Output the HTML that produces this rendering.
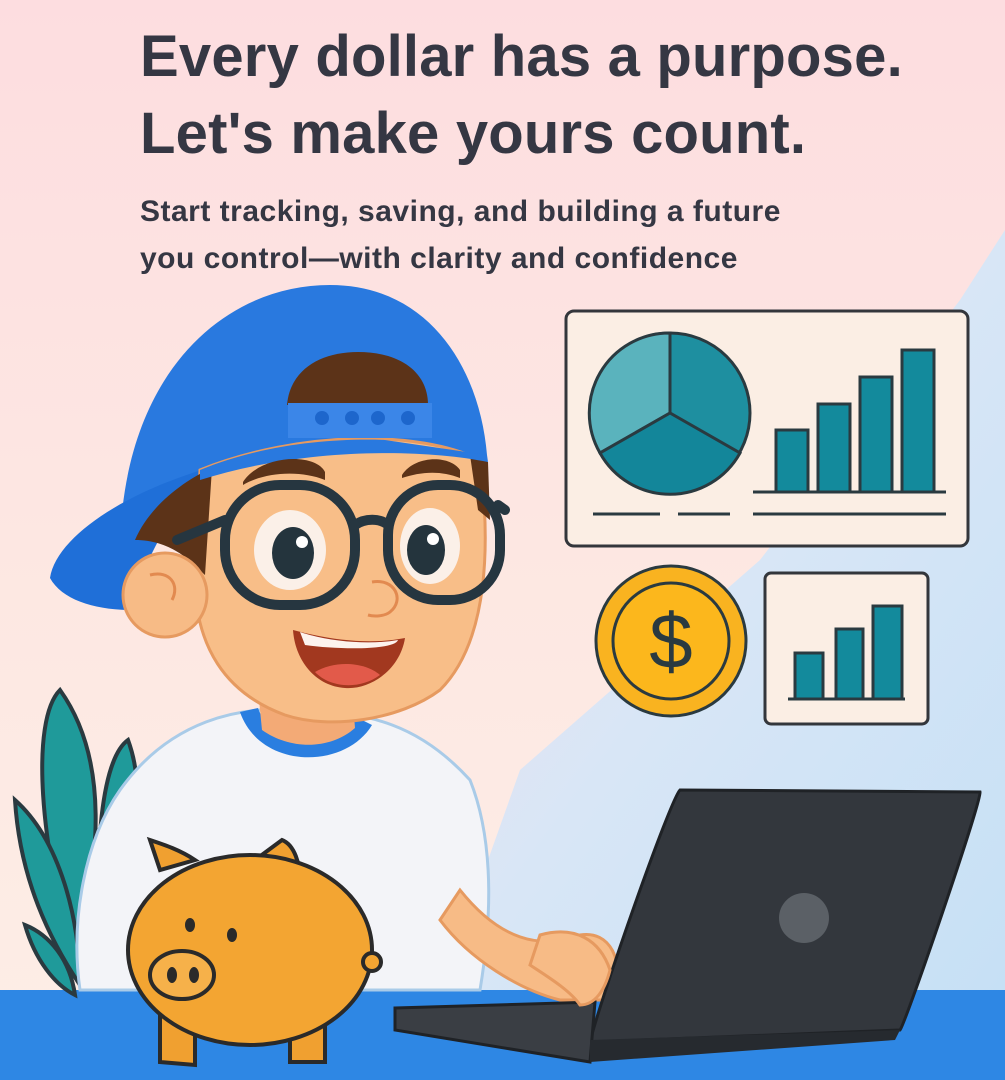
<!DOCTYPE html>
<html><head><meta charset="utf-8"><style>
html,body{margin:0;padding:0}
body{width:1005px;height:1080px;overflow:hidden;position:relative;font-family:"Liberation Sans",Arial,sans-serif;background:#fde8e2}
svg{position:absolute;left:0;top:0}
.t{position:absolute;left:140px;color:#353743;font-weight:700;white-space:nowrap}
h1{margin:0;font-size:58px;line-height:77px;letter-spacing:0.2px}
</style></head><body>
<svg width="1005" height="1080" viewBox="0 0 1005 1080">
<defs>
<linearGradient id="bg" x1="0" y1="0" x2="0" y2="1"><stop offset="0" stop-color="#fddde0"/><stop offset="0.5" stop-color="#fde7e2"/><stop offset="1" stop-color="#fdeee6"/></linearGradient>
<linearGradient id="bl" x1="0" y1="0" x2="1" y2="1"><stop offset="0" stop-color="#f3e0ec"/><stop offset="0.5" stop-color="#d8e6f6"/><stop offset="1" stop-color="#c6e0f5"/></linearGradient>
</defs>
<rect width="1005" height="1080" fill="url(#bg)"/>
<path d="M1005 230 L1005 995 L440 995 L520 770 L760 560 L960 300 Z" fill="url(#bl)"/>
<rect x="0" y="990" width="1005" height="90" fill="#2e87e4"/>
<g fill="#1f9a9a" stroke="#2a3a40" stroke-width="4">
<path d="M60 690 C30 720 40 850 75 960 C100 860 110 760 60 690 Z"/>
<path d="M128 740 C100 760 95 860 100 930 C130 880 150 800 128 740 Z"/>
<path d="M15 800 C20 880 50 940 80 985 C80 920 60 840 15 800 Z"/>
<path d="M25 925 C35 960 55 985 75 995 C70 960 50 935 25 925 Z"/>
</g>
<rect x="566" y="311" width="402" height="235" rx="8" fill="#fbeee4" stroke="#33363b" stroke-width="3"/>
<circle cx="670" cy="413" r="80" fill="#1e8fa0" stroke="#2a3a40" stroke-width="3"/>
<path d="M670 413 L670 333 A80 80 0 0 0 600 453 Z" fill="#5ab3bd" stroke="#2a3a40" stroke-width="3"/>
<path d="M670 413 L600 453 A80 80 0 0 0 740 453 Z" fill="#13869a" stroke="#2a3a40" stroke-width="3"/>
<g fill="#138a9c" stroke="#2a3a40" stroke-width="3">
<rect x="776" y="430" width="32" height="62"/><rect x="818" y="404" width="32" height="88"/><rect x="860" y="377" width="32" height="115"/><rect x="902" y="350" width="32" height="142"/>
</g>
<g stroke="#2a3a40" stroke-width="3"><line x1="753" y1="492" x2="946" y2="492"/><line x1="593" y1="514" x2="660" y2="514"/><line x1="678" y1="514" x2="730" y2="514"/><line x1="753" y1="514" x2="946" y2="514"/></g>
<circle cx="671" cy="641" r="75" fill="#f9b320" stroke="#2a3a40" stroke-width="3"/>
<circle cx="671" cy="641" r="58" fill="#fcb71c" stroke="#2a3a40" stroke-width="3"/>
<text x="671" y="668" text-anchor="middle" font-family="Liberation Sans" font-size="78" fill="#2a3a40">$</text>
<rect x="765" y="573" width="163" height="151" rx="6" fill="#fbeee4" stroke="#33363b" stroke-width="3"/>
<g fill="#138a9c" stroke="#2a3a40" stroke-width="3"><rect x="795" y="653" width="28" height="46"/><rect x="836" y="629" width="27" height="70"/><rect x="873" y="606" width="29" height="93"/></g>
<line x1="788" y1="699" x2="905" y2="699" stroke="#2a3a40" stroke-width="3"/>
<path d="M120 790 C170 720 240 705 300 710 C370 712 420 725 470 780 C490 830 495 900 480 990 L80 990 C70 920 85 840 120 790 Z" fill="#f3f4f8" stroke="#a9cbe8" stroke-width="3"/>
<path d="M240 712 C260 770 345 770 372 725 L352 715 C335 745 270 745 258 708 Z" fill="#2a7ee0"/>
<path d="M460 890 C500 940 540 950 580 935 C610 930 625 960 615 1000 L560 1000 C520 990 470 960 440 920 Z" fill="#f7bb86" stroke="#e69a60" stroke-width="3"/>
<path d="M258 690 L262 730 C290 750 330 750 355 728 L352 690 Z" fill="#f3aa76"/>
<!-- cap -->
<path d="M120 570 C115 380 220 285 330 285 C430 285 480 370 487 455 L487 470 L200 480 L130 560 Z" fill="#2979df"/>
<path d="M50 578 C55 545 100 510 160 485 C210 465 260 452 290 448 L220 470 C180 500 150 540 132 610 C95 610 62 600 50 578 Z" fill="#1f6fd8"/>
<!-- face -->
<path d="M200 470 C300 430 420 430 480 460 C490 540 490 640 440 690 C400 720 330 730 285 715 C230 695 190 650 195 560 Z" fill="#f8be88" stroke="#e69a60" stroke-width="3"/>
<path d="M135 540 C150 505 185 480 212 468 L205 575 C190 560 170 540 135 540 Z" fill="#5c3318"/>
<path d="M470 455 L488 462 L490 520 L478 510 Z" fill="#5c3318"/>
<circle cx="165" cy="595" r="42" fill="#f7bb86" stroke="#e69a60" stroke-width="3"/>
<path d="M150 575 C170 570 180 585 172 600" fill="none" stroke="#e28a50" stroke-width="3"/>
<path d="M287 405 C290 370 320 352 358 352 C400 352 428 372 428 405 Z" fill="#5c3318"/>
<path d="M200 470 C260 445 330 438 385 440 L487 455 L488 462 C420 448 300 448 200 480 Z" fill="#2979df"/>
<rect x="288" y="403" width="144" height="35" fill="#3b86e8"/>
<g fill="#1d66cc"><circle cx="322" cy="418" r="7"/><circle cx="352" cy="418" r="7"/><circle cx="378" cy="418" r="7"/><circle cx="408" cy="418" r="7"/></g>
<path d="M243 482 C260 455 315 452 325 472 L325 480 C300 470 265 472 243 485 Z" fill="#5c3318"/>
<path d="M402 475 C415 455 450 455 460 470 L460 478 C440 470 420 472 402 478 Z" fill="#5c3318"/>
<ellipse cx="290" cy="550" rx="36" ry="40" fill="#fbf0e8"/>
<ellipse cx="293" cy="553" rx="21" ry="26" fill="#24343d"/><circle cx="302" cy="542" r="6" fill="#fff"/>
<ellipse cx="430" cy="546" rx="30" ry="38" fill="#fbf0e8"/>
<ellipse cx="426" cy="550" rx="19" ry="25" fill="#24343d"/><circle cx="433" cy="539" r="6" fill="#fff"/>
<g fill="none" stroke="#263640" stroke-width="10" stroke-linecap="round">
<rect x="225" y="485" width="130" height="120" rx="55"/>
<rect x="388" y="485" width="112" height="115" rx="50"/>
<path d="M355 525 C365 518 380 518 388 525"/>
<path d="M225 520 L177 540"/><path d="M498 505 L505 510"/>
</g>
<path d="M372 582 C395 578 405 600 390 612 C385 616 375 617 368 615" fill="none" stroke="#e28a50" stroke-width="3"/>
<path d="M293 630 C330 640 370 645 405 638 C400 670 370 690 345 688 C315 686 295 660 293 630 Z" fill="#a2381f"/>
<path d="M300 632 C330 642 370 645 398 640 C395 650 340 650 305 645 Z" fill="#fdf3ee"/>
<path d="M315 672 C335 660 365 662 380 675 C360 690 330 688 315 672 Z" fill="#e25a4a"/>
<path d="M680 790 L980 792 C982 800 905 1025 900 1030 L590 1042 C600 1000 670 800 680 790 Z" fill="#33373d" stroke="#1f2226" stroke-width="3"/>
<circle cx="804" cy="918" r="25" fill="#5b6066"/>
<path d="M395 1008 L595 1002 L590 1062 L395 1030 Z" fill="#3a3e44" stroke="#1f2226" stroke-width="3"/>
<path d="M590 1040 L900 1030 L895 1040 L590 1062 Z" fill="#262a2f"/>
<path d="M540 935 C575 925 600 940 610 970 C605 990 595 1005 580 1005 C570 990 545 975 530 965 Z" fill="#f7bb86" stroke="#e69a60" stroke-width="3"/>
<g stroke="#2a2a2a" stroke-width="4">
<path d="M160 1010 L160 1062 L195 1065 L195 1020 Z M290 1015 L290 1062 L325 1062 L325 1012 Z" fill="#f0a030"/>
<path d="M160 870 L150 840 C165 845 180 850 195 860 Z" fill="#f0a030"/>
<path d="M255 860 L282 840 C295 845 300 865 300 880 Z" fill="#f0a030"/>
<ellipse cx="250" cy="950" rx="122" ry="95" fill="#f3a532"/>
<circle cx="372" cy="962" r="9" fill="#f3a532"/>
<ellipse cx="182" cy="975" rx="32" ry="24" fill="#f6b14a"/>
</g>
<g fill="#2a2a2a"><ellipse cx="172" cy="975" rx="5" ry="8"/><ellipse cx="194" cy="975" rx="5" ry="8"/><ellipse cx="190" cy="925" rx="5" ry="7"/><ellipse cx="232" cy="935" rx="5" ry="7"/></g>
</svg>
<div class="t" style="top:18px"><h1>Every dollar has a purpose.<br>Let's make yours count.</h1></div>
<div class="t" style="top:188px;font-size:30px;line-height:47px;letter-spacing:0.5px">Start tracking, saving, and building a future<br>you control—with clarity and confidence</div>
</body></html>
